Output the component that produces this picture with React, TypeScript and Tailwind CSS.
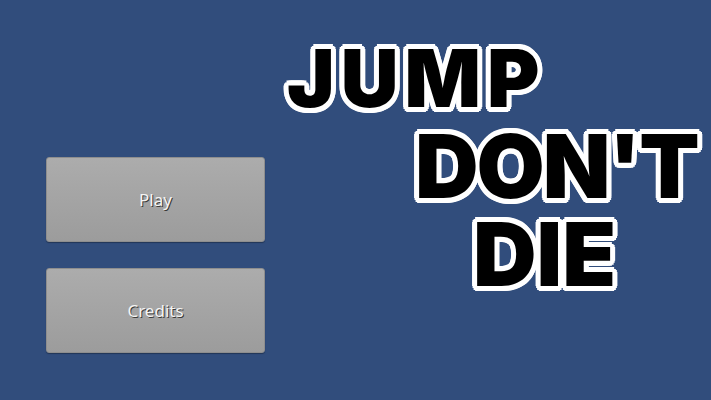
import React from 'react';

const MenuButton: React.FC<{ label: string }> = ({ label }) => (
  <button className="w-[219px] h-[85px] rounded-[3px] bg-gradient-to-b from-[#acacac] to-[#9c9c9c] border border-[#8e8e8e] shadow-[0_1px_1px_rgba(0,0,0,0.3)] flex items-center justify-center">
    <span className="text-[#f4f4f4] text-[17px] [text-shadow:1px_1px_0_#3a3a3a] [font-family:'Noto_Sans','Open_Sans',sans-serif]">
      {label}
    </span>
  </button>
);

// white outline drawn as a ring of shadows so the corners come out round
const outline =
  '[text-shadow:5px_0_0_#fff,4.6px_1.9px_0_#fff,3.5px_3.5px_0_#fff,1.9px_4.6px_0_#fff,0_5px_0_#fff,-1.9px_4.6px_0_#fff,-3.5px_3.5px_0_#fff,-4.6px_1.9px_0_#fff,-5px_0_0_#fff,-4.6px_-1.9px_0_#fff,-3.5px_-3.5px_0_#fff,-1.9px_-4.6px_0_#fff,0_-5px_0_#fff,1.9px_-4.6px_0_#fff,3.5px_-3.5px_0_#fff,4.6px_-1.9px_0_#fff,2.5px_0_0_#fff,0_2.5px_0_#fff,-2.5px_0_0_#fff,0_-2.5px_0_#fff]';

export default function App() {
  return (
    <div className="w-[711px] h-[400px] bg-[#314d7c] flex overflow-hidden">
      <div className="flex flex-col gap-[26px] pt-[157px] pl-[46px]">
        <MenuButton label="Play" />
        <MenuButton label="Credits" />
      </div>
      <div className="flex flex-col items-start pt-[45px] ml-[22px] text-black font-black [font-family:Inter,'Liberation_Sans',sans-serif]">
        <div className={`text-[80px] leading-[66px] tracking-[6px] ${outline}`}>JUMP</div>
        <div className={`mt-[19px] ml-[128px] text-[88px] leading-[72px] tracking-[-2px] ${outline}`}>DON'T</div>
        <div className={`mt-[16px] ml-[186px] text-[88px] leading-[72px] tracking-[0px] ${outline}`}>DIE</div>
      </div>
    </div>
  );
}
